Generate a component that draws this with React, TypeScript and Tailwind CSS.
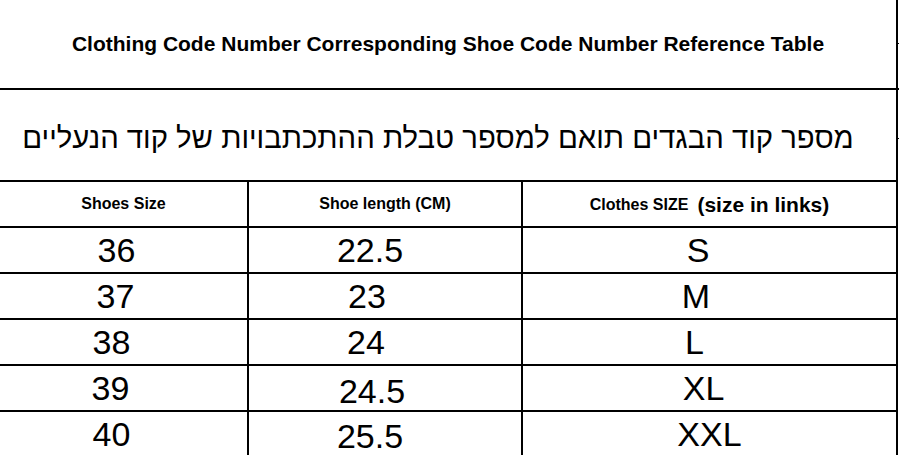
import React from "react";

const rows = [
  { a: "36", b: "22.5", c: "S", ao: "pr-[14px]", bo: "pr-[30px]", co: "pr-[23px]", bt: "", ct: "" },
  { a: "37", b: "23", c: "M", ao: "pr-[16px]", bo: "pr-[36px]", co: "pr-[27px]", bt: "", ct: "" },
  { a: "38", b: "24", c: "L", ao: "pr-[24px]", bo: "pr-[38px]", co: "pr-[30px]", bt: "", ct: "" },
  { a: "39", b: "24.5", c: "XL", ao: "pr-[26px]", bo: "pr-[26px]", co: "pr-[12px]", bt: "pt-[6px]", ct: "" },
  { a: "40", b: "25.5", c: "XXL", ao: "pr-[24px]", bo: "pr-[30px]", co: "pl-[0px]", bt: "pt-[4px]", ct: "" },
];

export default function App() {
  return (
    <div
      className="relative w-[899px] h-[455px] overflow-hidden bg-white text-black"
      style={{ fontFamily: '"Liberation Sans", Arial, sans-serif' }}
    >
      <div className="w-[898px] border-r-2 border-black">
        <div className="h-[90px] border-b-2 border-black flex items-center justify-center pb-[1px]">
          <span className="font-bold text-[21px] leading-none">
            Clothing Code Number Corresponding Shoe Code Number Reference Table
          </span>
        </div>
        <div className="h-[92px] border-b-2 border-black flex items-center justify-center pr-[20px] pt-[6px]">
          <span dir="rtl" className="text-[29.3px] leading-none">
            מספר קוד הבגדים תואם למספר טבלת ההתכתבויות של קוד הנעליים
          </span>
        </div>
        <div className="h-[46px] border-b-2 border-black flex">
          <div className="w-[249px] border-r-2 border-black flex items-center justify-center">
            <span className="font-bold text-[16px]">Shoes Size</span>
          </div>
          <div className="w-[274px] border-r-2 border-black flex items-center justify-center">
            <span className="font-bold text-[16px]">Shoe length (CM)</span>
          </div>
          <div className="flex-1 flex items-center justify-center gap-[9px] pt-[2px]">
            <span className="font-bold text-[16px]">Clothes SIZE</span>
            <span className="font-bold text-[21px]">(size in links)</span>
          </div>
        </div>
        {rows.map((r) => (
          <div key={r.a} className="h-[46px] border-b-2 border-black flex">
            <div className={`w-[249px] border-r-2 border-black flex items-center justify-center ${r.ao}`}>
              <span className="text-[34px] leading-none">{r.a}</span>
            </div>
            <div className={`w-[274px] border-r-2 border-black flex items-center justify-center ${r.bo} ${r.bt}`}>
              <span className="text-[34px] leading-none">{r.b}</span>
            </div>
            <div className={`flex-1 flex items-center justify-center ${r.co} ${r.ct}`}>
              <span className="text-[34px] leading-none">{r.c}</span>
            </div>
          </div>
        ))}
      </div>
      <div className="absolute left-[897px] top-[43px] w-[2px] h-[1px] bg-black" />
      <div className="absolute left-[897px] top-[88px] w-[2px] h-[2px] bg-black" />
      <div className="absolute left-[897px] top-[138px] w-[2px] h-[1px] bg-black" />
    </div>
  );
}
